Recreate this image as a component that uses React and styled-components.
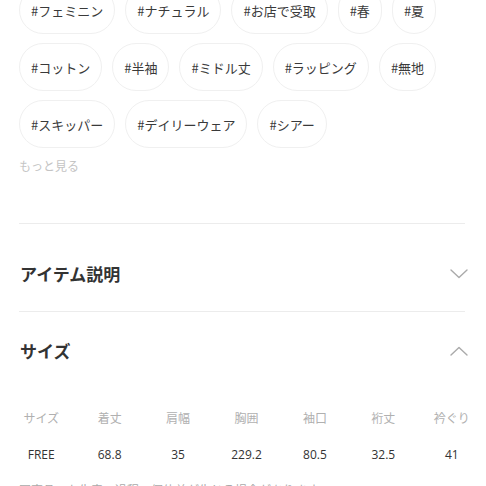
import React from "react";
import styled, { createGlobalStyle } from "styled-components";

const GlobalStyle = createGlobalStyle`
  html, body {
    margin: 0;
    padding: 0;
    background: #fff;
    overflow: hidden;
  }
  body {
    font-family: "Open Sans", "Noto Sans CJK JP", sans-serif;
    color: #333;
  }
`;

const tags = [
  "#フェミニン",
  "#ナチュラル",
  "#お店で受取",
  "#春",
  "#夏",
  "#コットン",
  "#半袖",
  "#ミドル丈",
  "#ラッピング",
  "#無地",
  "#スキッパー",
  "#デイリーウェア",
  "#シアー",
];

const sizeHeaders = ["サイズ", "着丈", "肩幅", "胸囲", "袖口", "裄丈", "衿ぐり"];
const sizeValues = ["FREE", "68.8", "35", "229.2", "80.5", "32.5", "41"];

const Page = styled.div`
  width: 486px;
  margin-top: -14px;
  padding: 0 21px 0 19px;
  box-sizing: border-box;
`;

const TagList = styled.div`
  display: flex;
  flex-wrap: wrap;
  column-gap: 10px;
  row-gap: 9px;
`;

const Tag = styled.a`
  display: inline-flex;
  align-items: center;
  height: 48px;
  padding: 0 11px;
  box-sizing: border-box;
  border: 1px solid #f0f0f0;
  border-radius: 24px;
  font-family: "Noto Sans CJK JP", sans-serif;
  font-size: 13px;
  color: #3a3a3a;
  text-decoration: none;
  white-space: nowrap;
`;

const MoreLink = styled.div`
  margin-top: 11px;
  font-size: 12px;
  line-height: 16px;
  color: #c4c4c4;
`;

const Divider = styled.div`
  height: 1px;
  background: #ececec;
  margin-top: ${(p) => p.$top || 0}px;
`;

const SectionHeader = styled.div`
  display: flex;
  align-items: center;
  justify-content: space-between;
  padding-top: ${(p) => p.$top}px;
  padding-bottom: ${(p) => p.$bottom}px;
  padding-left: 1px;
`;

const SectionTitle = styled.h2`
  margin: 0;
  font-size: 17px;
  line-height: 24px;
  font-weight: 700;
  color: #333;
  font-family: "Noto Sans CJK JP", sans-serif;
`;

const Chevron = styled.svg`
  width: 18px;
  height: 10px;
  margin-right: -3px;
  flex-shrink: 0;
`;

const SizeTable = styled.div`
  margin: 0 -21px 0 -12px;
  display: grid;
  grid-template-columns: repeat(7, 1fr);
  grid-auto-rows: 36px;
  margin-top: ${(p) => p.$top}px;
`;

const Cell = styled.div`
  display: flex;
  align-items: center;
  justify-content: center;
  font-size: 12px;
  color: ${(p) => (p.$head ? "#b0b0b0" : "#333")};
`;

const Note = styled.p`
  margin: 11px 0 0;
  font-size: 12px;
  line-height: 16px;
  color: #aaa;
  white-space: nowrap;
`;

const ChevronIcon = ({ up }) => (
  <Chevron viewBox="0 0 18 10" fill="none">
    <polyline
      points={up ? "1,9 9,1.5 17,9" : "1,1 9,8.5 17,1"}
      stroke="#aaa"
      strokeWidth="1.4"
      strokeLinecap="round"
      strokeLinejoin="round"
    />
  </Chevron>
);

export default function App() {
  return (
    <>
      <GlobalStyle />
      <Page>
        <TagList>
          {tags.map((t) => (
            <Tag key={t}>{t}</Tag>
          ))}
        </TagList>
        <MoreLink>もっと見る</MoreLink>

        <Divider $top={48} />
        <SectionHeader $top={38} $bottom={25}>
          <SectionTitle>アイテム説明</SectionTitle>
          <ChevronIcon />
        </SectionHeader>

        <Divider />
        <SectionHeader $top={27} $bottom={0}>
          <SectionTitle>サイズ</SectionTitle>
          <ChevronIcon up />
        </SectionHeader>

        <SizeTable $top={37}>
          {sizeHeaders.map((h) => (
            <Cell key={h} $head>
              {h}
            </Cell>
          ))}
          {sizeValues.map((v, i) => (
            <Cell key={i}>{v}</Cell>
          ))}
        </SizeTable>
        <Note>同商品でも生産の過程で個体差が生じる場合があります。</Note>
      </Page>
    </>
  );
}
